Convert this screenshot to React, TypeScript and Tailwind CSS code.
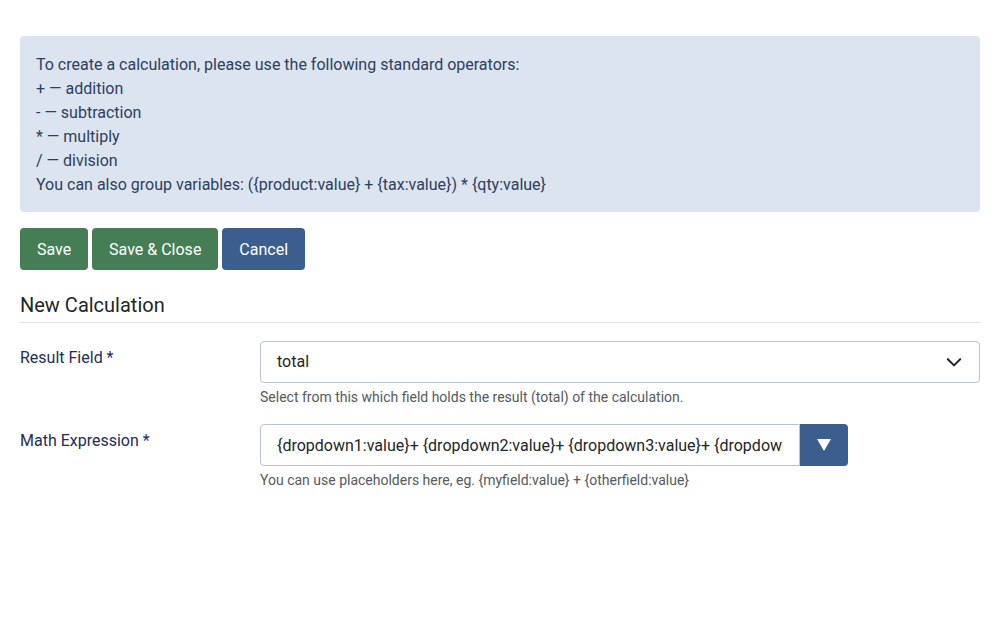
import React from "react";

export default function App() {
  return (
    <div className="min-h-[626px] bg-white px-5 pt-9" style={{ fontFamily: "Roboto, 'Noto Sans', sans-serif" }}>
      <div className="rounded-[4px] bg-[#dce4f0] px-4 pt-[17px] pb-[15px] text-[16px] leading-[24px] text-[#2c3f61]">
        <div>To create a calculation, please use the following standard operators:</div>
        <div>+ — addition</div>
        <div>- — subtraction</div>
        <div>* — multiply</div>
        <div>/ — division</div>
        <div>You can also group variables: ({"{product:value}"} + {"{tax:value}"}) * {"{qty:value}"}</div>
      </div>

      <div className="mt-4 flex gap-1">
        <button className="h-[42px] rounded-[4px] bg-[#457d54] px-[17px] pt-[1px] text-[16px] text-white">Save</button>
        <button className="h-[42px] w-[126px] rounded-[4px] bg-[#457d54] pt-[1px] text-[16px] text-white">Save &amp; Close</button>
        <button className="h-[42px] w-[83px] rounded-[4px] bg-[#3c5e8f] pt-[1px] text-[16px] text-white">Cancel</button>
      </div>

      <h2 className="mt-[23px] border-b border-[#dee2e6] pb-[5px] text-[20px] leading-[24px] text-[#22262a]">New Calculation</h2>

      <div className="mt-[18px] grid grid-cols-[240px_1fr]">
        <label className="pt-[5px] text-[16px] leading-[24px] text-[#1c2d59]">Result Field *</label>
        <div>
          <div className="flex h-[42px] items-center justify-between rounded-[4px] border border-[#b8c4d6] bg-white pl-4 pr-4 text-[16px] text-[#22262a]">
            <span>total</span>
            <svg width="18" height="18" viewBox="0 0 16 16" fill="none" stroke="#22262a" strokeWidth="1.8" strokeLinecap="round" strokeLinejoin="round">
              <path d="M2.5 5.5 8 11l5.5-5.5" />
            </svg>
          </div>
          <div className="mt-[4px] text-[14px] leading-[21px] text-[#555a60]">Select from this which field holds the result (total) of the calculation.</div>
        </div>
      </div>

      <div className="mt-[16px] grid grid-cols-[240px_1fr]">
        <label className="pt-[5px] text-[16px] leading-[24px] text-[#1c2d59]">Math Expression *</label>
        <div>
          <div className="flex">
            <input
              readOnly
              value="{dropdown1:value}+ {dropdown2:value}+ {dropdown3:value}+ {dropdown4:value}"
              className="h-[42px] w-[540px] rounded-l-[4px] border border-[#b8c4d6] bg-white px-4 text-[16px] text-[#22262a] outline-none"
              style={{ fontFamily: "Roboto, 'Noto Sans', sans-serif" }}
            />
            <button className="flex h-[42px] w-[48px] items-center justify-center rounded-r-[4px] bg-[#3c5e8f]">
              <svg width="14" height="12" viewBox="0 0 14 12">
                <path d="M0 0h14L7 12z" fill="#ffffff" />
              </svg>
            </button>
          </div>
          <div className="mt-[4px] text-[14px] leading-[21px] text-[#555a60]">You can use placeholders here, eg. {"{myfield:value}"} + {"{otherfield:value}"}</div>
        </div>
      </div>
    </div>
  );
}
